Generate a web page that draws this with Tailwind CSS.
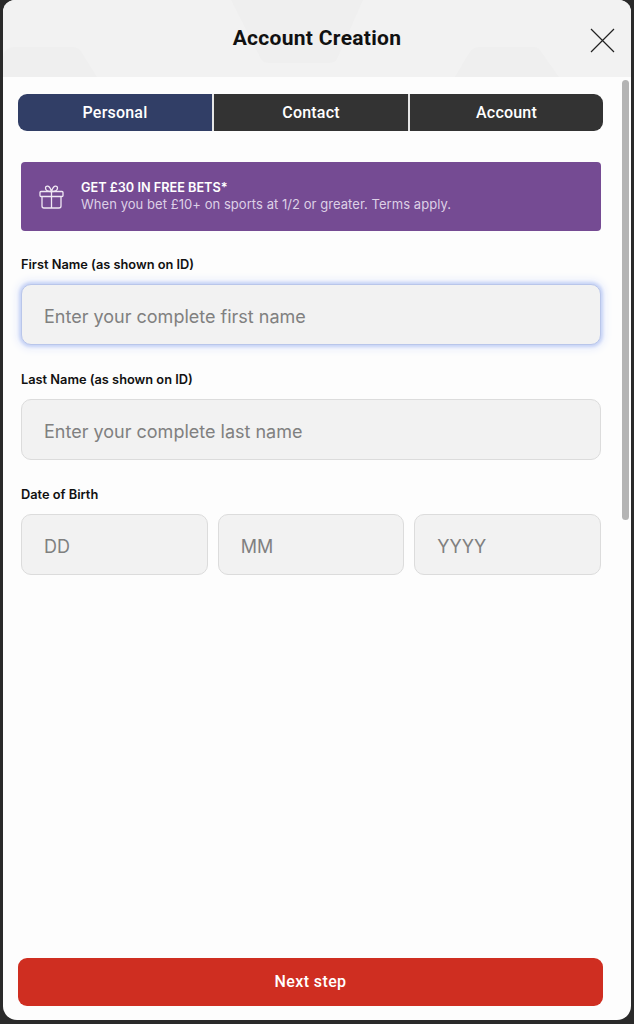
<!DOCTYPE html>
<html lang="en">
<head>
    <meta charset="UTF-8">
    <meta name="viewport" content="width=device-width, initial-scale=1.0">
    <title>Account Creation</title>
    <script src="https://cdn.jsdelivr.net/npm/@tailwindcss/browser@4"></script>
</head>
<body class="bg-[#2a2a2a] font-['Inter',sans-serif]">
    <div class="w-[634px] h-[1024px] overflow-hidden pl-[3px] pr-[3px] pb-[4px]">
        <div class="relative h-[1020px] bg-[#fdfdfd] rounded-t-[12px] rounded-b-[14px] overflow-hidden flex flex-col">

            <!-- Header -->
            <div class="relative h-[77px] shrink-0 bg-[#f2f2f2] overflow-hidden flex items-center justify-center">
                <svg class="absolute left-0 top-0" width="628" height="77" viewBox="0 0 628 77" fill="#efefef">
                    <path d="M228 0 H360 L334 59 Q332 63 326 63 H266 Q260 63 258 59 Z"/>
                    <path d="M0 56 Q2 47 12 47 H70 Q76 47 79 53 L94 77 H0 Z"/>
                    <path d="M452 77 L466 53 Q470 47 476 47 H531 Q536 47 539 53 L556 77 Z"/>
                </svg>
                <h1 class="relative font-['Roboto',sans-serif] text-[21px] font-bold tracking-[0.3px] text-[#111] leading-none -mt-[1px]">Account Creation</h1>
                <button class="absolute left-[587px] top-[28px]">
                    <svg class="block" width="25" height="25" viewBox="0 0 25 25" fill="none" stroke="#222" stroke-width="1.2">
                        <path d="M1 1 L24 24 M24 1 L1 24"/>
                    </svg>
                </button>
            </div>

            <!-- Scrollbar -->
            <div class="absolute left-[619px] top-[80px] w-[7px] h-[440px] rounded-full bg-[#b4b4b4]"></div>

            <!-- Body -->
            <div class="flex-1 flex flex-col pl-[15px] pr-[28px] pt-[17px] pb-[14px]">
                <div class="h-[37px] flex rounded-[9px] overflow-hidden text-white font-['Roboto',sans-serif] text-[16px] font-medium tracking-[0.2px]">
                    <div class="w-[194px] bg-[#313e66] flex items-center justify-center">Personal</div>
                    <div class="w-[2px] bg-[#e6e6e6]"></div>
                    <div class="w-[194px] bg-[#333333] flex items-center justify-center">Contact</div>
                    <div class="w-[2px] bg-[#e6e6e6]"></div>
                    <div class="flex-1 bg-[#333333] flex items-center justify-center">Account</div>
                </div>

                <div class="mt-[31px] ml-[3px] mr-[2px] h-[69px] rounded-[4px] bg-[#754b93] flex items-center pl-[18px] text-white">
                    <svg class="shrink-0" width="25" height="25" viewBox="0 0 25 25" fill="none" stroke="#f0e8f4" stroke-width="1.3">
                        <rect x="1" y="7.5" width="23" height="5" rx="1"/>
                        <path d="M3 12.5 V22 Q3 24 5 24 H20 Q22 24 22 22 V12.5 M12.5 7.5 V24"/>
                        <path d="M12.5 7.5 C9 7.5 6.5 6.5 6.5 4 C6.5 1.5 10.5 0.5 12.5 7.5 C14.5 0.5 18.5 1.5 18.5 4 C18.5 6.5 16 7.5 12.5 7.5 Z"/>
                    </svg>
                    <div class="ml-[17px] -mt-[2px]">
                        <p class="text-[12.7px] leading-[17px] font-semibold">GET £30 IN FREE BETS*</p>
                        <p class="text-[13px] leading-[17px] tracking-[0.05px] text-[#ddd0e6]">When you bet £10+ on sports at 1/2 or greater. Terms apply.</p>
                    </div>
                </div>

                <label class="block mt-[25px] ml-[3px] text-[12.8px] leading-[18px] font-semibold text-[#111]">First Name (as shown on ID)</label>
                <div class="mt-[10px] ml-[3px] mr-[2px] h-[61px] rounded-[10px] bg-[#f2f2f2] border border-[#b9c6ea] shadow-[0_0_3px_2px_#c8d4f6,0_0_8px_4px_#e8edfc] flex items-center pl-[22px] pt-[4px] text-[18px] text-[#808080]">Enter your complete first name</div>

                <label class="block mt-[26px] ml-[3px] text-[12.8px] leading-[18px] font-semibold text-[#111]">Last Name (as shown on ID)</label>
                <div class="mt-[10px] ml-[3px] mr-[2px] h-[61px] rounded-[10px] bg-[#f2f2f2] border border-[#dcdcdc] flex items-center pl-[22px] pt-[4px] text-[18px] text-[#808080]">Enter your complete last name</div>

                <label class="block mt-[26px] ml-[3px] text-[12.8px] leading-[18px] font-semibold text-[#111]">Date of Birth</label>
                <div class="mt-[10px] ml-[3px] mr-[2px] grid grid-cols-3 gap-[10px]">
                    <div class="h-[61px] rounded-[10px] bg-[#f2f2f2] border border-[#dcdcdc] flex items-center pl-[22px] pt-[4px] text-[18px] text-[#808080]">DD</div>
                    <div class="h-[61px] rounded-[10px] bg-[#f2f2f2] border border-[#dcdcdc] flex items-center pl-[22px] pt-[4px] text-[18px] text-[#808080]">MM</div>
                    <div class="h-[61px] rounded-[10px] bg-[#f2f2f2] border border-[#dcdcdc] flex items-center pl-[22px] pt-[4px] text-[18px] text-[#808080]">YYYY</div>
                </div>

                <button class="mt-auto h-[48px] rounded-[9px] bg-[#cf2e21] text-white font-['Roboto',sans-serif] text-[16px] font-medium tracking-[0.4px]">Next step</button>
            </div>
        </div>
    </div>
</body>
</html>
